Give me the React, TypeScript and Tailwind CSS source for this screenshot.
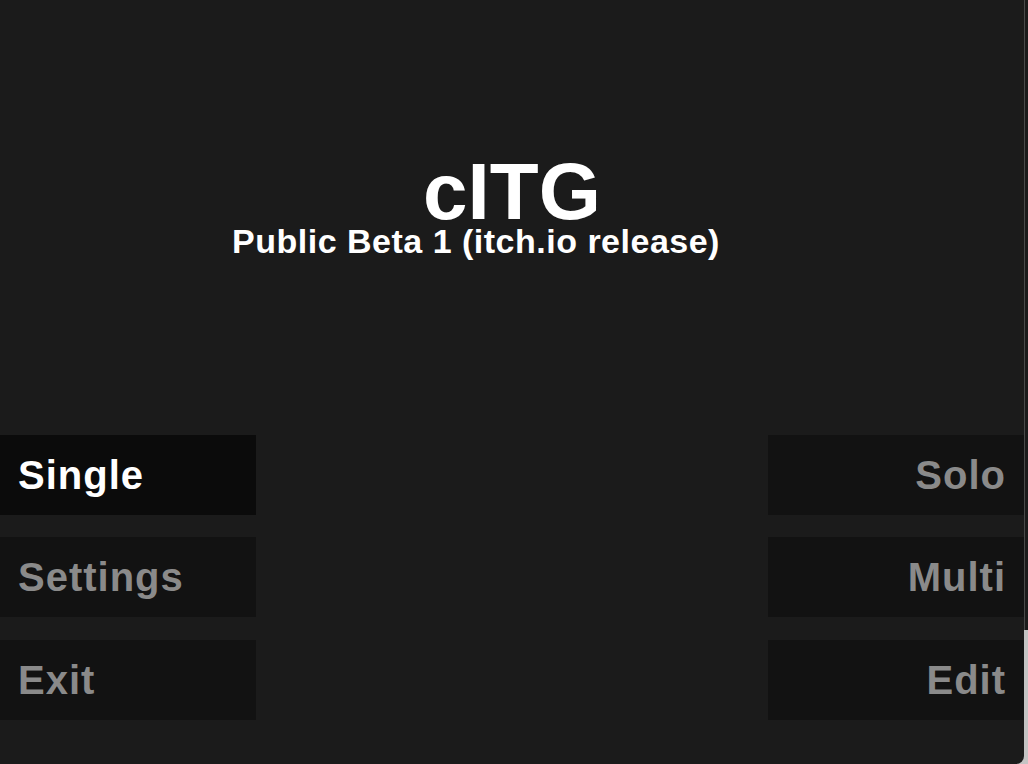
import React from 'react';

const leftItems = [
  { label: 'Single', active: true },
  { label: 'Settings', active: false },
  { label: 'Exit', active: false },
];
const rightItems = ['Solo', 'Multi', 'Edit'];
const rowGaps = ['mt-0', 'mt-[22px]', 'mt-[23px]'];

function MenuBox({ label, active, right }: { label: string; active?: boolean; right?: boolean }) {
  return (
    <div
      className={`w-[256px] h-[80px] flex items-center ${right ? 'justify-end pr-[18px]' : 'pl-[18px]'} ${
        active ? 'bg-[#0b0b0b] text-white' : 'bg-[#121212] text-[#8a8a8a]'
      }`}
    >
      <span className="text-[40px] leading-[40px] font-bold tracking-[1px]">{label}</span>
    </div>
  );
}

export default function App() {
  return (
    <div className="w-[1028px] h-[764px] flex bg-[#c4c4c4] overflow-hidden" style={{ fontFamily: '"Liberation Sans", Arial, sans-serif' }}>
      <div className="w-[1024px] h-full bg-[#1b1b1b] rounded-br-[8px] flex flex-col">
        <div className="h-[435px] pt-[157px] flex flex-col items-center">
          <h1 className="text-[80px] leading-[70px] font-bold text-white">cITG</h1>
          <p className="mr-[72px] text-[34px] leading-[29px] font-bold text-white tracking-[0.5px]">
            Public Beta 1 (itch.io release)
          </p>
        </div>
        {leftItems.map((item, i) => (
          <div key={item.label} className={`flex justify-between ${rowGaps[i]}`}>
            <MenuBox label={item.label} active={item.active} />
            <MenuBox label={rightItems[i]} right />
          </div>
        ))}
      </div>
      <div className="w-[4px] h-full flex flex-col">
        <div className="h-[630px] bg-[#1b1b1b] border-l border-[#4a4a4a]" />
        <div className="flex-1 bg-[#c4c4c4]" />
      </div>
    </div>
  );
}
